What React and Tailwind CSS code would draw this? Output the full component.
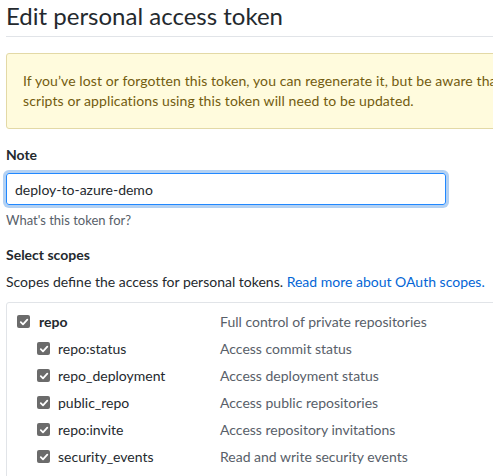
const scopes = [
  { name: 'repo:status', desc: 'Access commit status' },
  { name: 'repo_deployment', desc: 'Access deployment status' },
  { name: 'public_repo', desc: 'Access public repositories' },
  { name: 'repo:invite', desc: 'Access repository invitations' },
  { name: 'security_events', desc: 'Read and write security events' },
];

function Check() {
  return (
    <span className="size-[13px] rounded-[2px] bg-[#6b6b6b] flex items-center justify-center shrink-0">
      <svg width="10" height="10" viewBox="0 0 10 10">
        <path d="M1.8 5.2 L4 7.3 L8.3 2.6" fill="none" stroke="#fff" strokeWidth="1.8" strokeLinecap="round" strokeLinejoin="round" />
      </svg>
    </span>
  );
}

export default function App() {
  return (
    <div className="w-[493px] h-[476px] overflow-hidden bg-white text-[#24292e] font-['Lato',sans-serif]">
      <div className="w-[560px] pl-[6px]">
        <div className="border-b border-[#e1e4e8] pb-[5px]">
          <h1 className="text-[24px] leading-[31px] font-normal text-[#24292e]">Edit personal access token</h1>
        </div>
        <div className="mt-[16px] bg-[#fffbdd] border border-[#e3d9a6] rounded-[3px] px-[16px] py-[17px] text-[14px] leading-[20px] text-[#735c0f] whitespace-nowrap tracking-[0.1px]">
          <div>If you’ve lost or forgotten this token, you can regenerate it, but be aware that any</div>
          <div>scripts or applications using this token will need to be updated.</div>
        </div>
        <div className="mt-[16px] text-[14px] font-bold leading-[20px]">Note</div>
        <div className="mt-[8px] w-[440px] h-[32px] border border-[#2188ff] rounded-[3px] shadow-[0_0_0_3px_rgba(3,102,214,0.3)] flex items-center px-[8px] text-[14px]">
          deploy-to-azure-demo
        </div>
        <div className="mt-[6px] text-[13px] leading-[18px] text-[#586069]">What's this token for?</div>
        <div className="mt-[16px] text-[14px] font-bold leading-[20px]">Select scopes</div>
        <div className="mt-[7px] text-[14px] leading-[20px] whitespace-nowrap">
          Scopes define the access for personal tokens.{' '}
          <span className="text-[#0366d6]">Read more about OAuth scopes.</span>
        </div>
        <div className="mt-[10px] border border-[#e1e4e8] rounded-[3px] pt-[5px] pb-[8px] text-[14px] leading-[20px]">
          <div className="flex items-center h-[27px]">
            <div className="w-[213px] flex items-center gap-[9px] pl-[10px]">
              <Check />
              <span className="font-bold">repo</span>
            </div>
            <span className="text-[#586069]">Full control of private repositories</span>
          </div>
          {scopes.map((s) => (
            <div key={s.name} className="flex items-center h-[27px]">
              <div className="w-[213px] flex items-center gap-[8px] pl-[30px]">
                <Check />
                <span>{s.name}</span>
              </div>
              <span className="text-[#586069]">{s.desc}</span>
            </div>
          ))}
        </div>
      </div>
    </div>
  );
}
